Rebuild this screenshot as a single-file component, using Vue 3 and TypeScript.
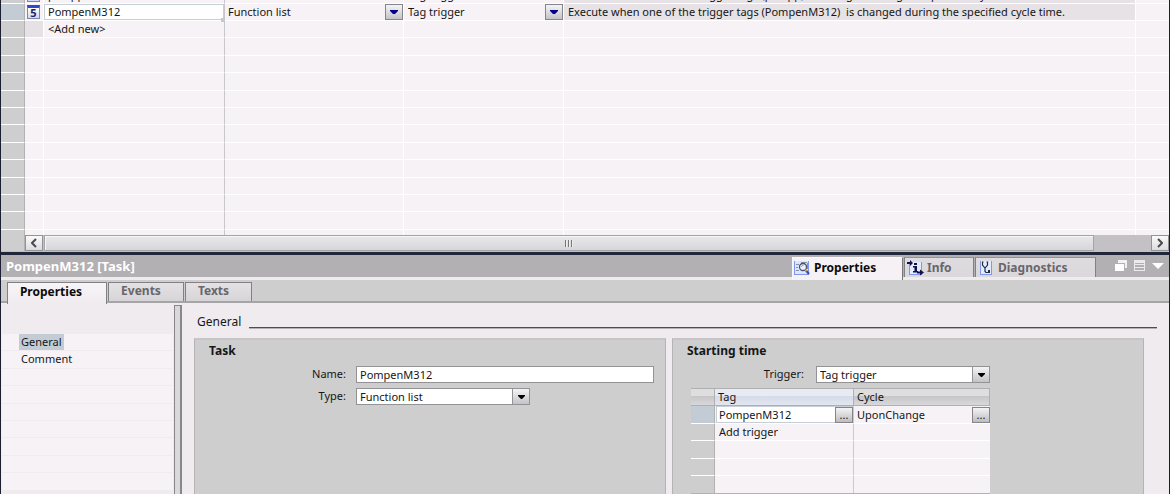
<script setup lang="ts">
import { ref } from 'vue'

interface Task {
  id: number
  name: string
  type: string
  trigger: string
  description: string
}

const describe = (tag: string): string =>
  `Execute when one of the trigger tags (${tag})  is changed during the specified cycle time.`

const previous: Task = { id: 4, name: 'pstopp', type: 'Function list', trigger: 'Tag trigger', description: describe('pstopp') }
const current: Task = { id: 5, name: 'PompenM312', type: 'Function list', trigger: 'Tag trigger', description: describe('PompenM312') }

const taskName = ref(current.name)
const taskType = ref(current.type)
const trigger = ref(current.trigger)
const cellName = ref(current.name)
const tagName = ref(current.name)
const emptyRows = 12
const navRows = 7
const sheets = ['Properties', 'Events', 'Texts']
const activeSheet = ref('Properties')
</script>

<template>
  <div class="app">
    <section class="tasks">
      <div class="viewport">
        <table class="grid" aria-label="Scheduled tasks">
          <colgroup>
            <col class="c-gutter" /><col class="c-icon" /><col class="c-name" /><col class="c-type" />
            <col class="c-trigger" /><col /><col class="c-end" />
          </colgroup>
          <tbody>
            <tr>
              <td class="gutter"></td>
              <td class="icon-cell"><span class="num">{{ previous.id }}</span></td>
              <td class="name">{{ previous.name }}</td>
              <td>{{ previous.type }}</td>
              <td>{{ previous.trigger }}</td>
              <td class="desc">{{ previous.description }}</td>
              <td></td>
            </tr>
            <tr class="selected">
              <td class="gutter"></td>
              <td class="icon-cell"><span class="num">{{ current.id }}</span></td>
              <td class="name editing">
                <input v-model="cellName" class="cell-input" aria-label="Task name" /><i class="handle"></i>
              </td>
              <td>
                <div class="pick">
                  <select v-model="taskType" aria-label="Task type"><option>Function list</option></select>
                  <span class="arrow"><svg width="8" height="4" viewBox="0 0 8 4"><path d="M0 0H8V1L5 4H3L0 1Z" /></svg></span>
                </div>
              </td>
              <td>
                <div class="pick">
                  <select v-model="trigger" aria-label="Task trigger"><option>Tag trigger</option></select>
                  <span class="arrow"><svg width="8" height="4" viewBox="0 0 8 4"><path d="M0 0H8V1L5 4H3L0 1Z" /></svg></span>
                </div>
              </td>
              <td class="desc">{{ current.description }}</td>
              <td></td>
            </tr>
            <tr>
              <td class="gutter"></td><td class="icon-cell dim"></td><td class="name">&lt;Add new&gt;</td>
              <td></td><td></td><td></td><td></td>
            </tr>
            <tr v-for="n in emptyRows" :key="n">
              <td class="gutter"></td><td></td><td class="name"></td><td></td><td></td><td></td><td></td>
            </tr>
          </tbody>
        </table>
      </div>
      <div class="hscroll">
        <span class="corner"></span>
        <button class="sbtn" aria-label="Scroll left"><svg width="6" height="10" viewBox="0 0 6 10"><path d="M5 1L1 5L5 9" /></svg></button>
        <div class="track"><div class="thumb"><i></i><i></i><i></i></div></div>
        <button class="sbtn" aria-label="Scroll right"><svg width="6" height="10" viewBox="0 0 6 10"><path d="M1 1L5 5L1 9" /></svg></button>
      </div>
    </section>

    <section class="inspector">
      <header class="titlebar">
        <h1>PompenM312 [Task]</h1>
        <nav class="views" aria-label="Inspector views">
          <button class="view v-props active">
            <svg width="17" height="16" viewBox="0 0 17 16">
              <rect x="0" y="1" width="15" height="14" fill="#7f98ee" /><rect x="1" y="1" width="13" height="13" fill="#dbe5ff" />
              <path d="M2 4.500H5M2 7.500H4M2 10.500H5" stroke="#8890a8" />
              <path d="M7 2.500H13M13.500 3V9" stroke="#8890a8" fill="none" />
              <circle cx="9" cy="7" r="3.500" fill="#eef4ff" stroke="#4a506c" stroke-width="1.300" />
              <path d="M7.500 7a1.500 1.500 0 0 1 2-1.500" stroke="#8594bb" fill="none" />
              <path d="M12 10.500L15 14" stroke="#3a55a0" stroke-width="2.200" /><path d="M11.500 9.500L13 11" stroke="#d8a040" stroke-width="1.500" />
            </svg>Properties
          </button>
          <button class="view v-info">
            <svg width="17" height="16" viewBox="0 0 17 16">
              <rect x="2" y="2" width="13" height="13" fill="#7f98ee" /><rect x="3" y="2" width="11" height="12" fill="#e4edff" />
              <path d="M0 2H3V0L6 3L3 6V4H0ZM10 11.500H13V9.500L17 12.500L13 15.500V13.500H10Z" fill="#10104e" />
              <path d="M7 3H10V5H7ZM6 6H10V11H11V12.500H6V11H7.500V7.500H6Z" fill="#10104e" />
            </svg>Info
          </button>
          <button class="view v-diag">
            <svg width="13" height="16" viewBox="0 0 13 16">
              <rect x="0" y="1" width="12" height="14" fill="#7f98ee" /><rect x="1" y="1" width="10" height="13" fill="#e4edff" />
              <path d="M3.500 2H2.500V5L4.500 7.500H5.500L7.500 5V2H6.500M5 7.500V11.500L6 12.500H8" stroke="#222947" stroke-width="1.200" fill="none" />
              <rect x="8" y="10" width="2" height="3" fill="#222947" />
            </svg>Diagnostics
          </button>
        </nav>
        <div class="winbtns">
          <button aria-label="Float"><svg width="12" height="11" viewBox="0 0 12 11"><path d="M3 0H12V8H10V3H3Z" opacity=".85" /><path d="M0 4H9V11H0Z" /></svg></button>
          <button aria-label="Restore"><svg width="11" height="11" viewBox="0 0 11 11"><path d="M0 0H11V3H0ZM0 4H11V5H0ZM0 7H11V8H0ZM0 10H11V11H0ZM0 3H1V11H0ZM10 3H11V11H10Z" opacity=".75" /></svg></button>
          <button aria-label="Collapse"><svg width="12" height="16" viewBox="0 0 12 16"><path d="M0 5H12L6 11Z" /></svg></button>
        </div>
      </header>

      <div class="sheets" role="tablist">
        <button
          v-for="s in sheets" :key="s" role="tab" :class="['sheet', s.toLowerCase(), { active: s === activeSheet }]"
          :aria-selected="s === activeSheet" @click="activeSheet = s"
        >{{ s }}</button>
      </div>

      <div class="body">
        <nav class="side" aria-label="Sections">
          <ul>
            <li><a href="#general" class="on">General</a></li>
            <li><a href="#comment">Comment</a></li>
            <li v-for="n in navRows" :key="n"></li>
          </ul>
        </nav>
        <div class="splitter"></div>
        <main class="content">
          <div class="heading"><h2 id="general">General</h2><hr /></div>
          <div class="panels">
            <section class="panel">
              <h3>Task</h3>
              <div class="field">
                <label for="f-name">Name:</label>
                <input id="f-name" v-model="taskName" class="box" />
              </div>
              <div class="field">
                <label for="f-type">Type:</label>
                <div class="combo">
                  <select id="f-type" v-model="taskType"><option>Function list</option></select>
                  <span class="arrow"><svg width="7" height="4" viewBox="0 0 7 4"><path d="M0 0H7V1L4 4H3L0 1Z" /></svg></span>
                </div>
              </div>
            </section>
            <section class="panel start">
              <h3>Starting time</h3>
              <div class="field">
                <label for="f-trigger">Trigger:</label>
                <div class="combo">
                  <select id="f-trigger" v-model="trigger"><option>Tag trigger</option></select>
                  <span class="arrow"><svg width="7" height="4" viewBox="0 0 7 4"><path d="M0 0H7V1L4 4H3L0 1Z" /></svg></span>
                </div>
              </div>
              <table class="tags" aria-label="Trigger tags">
                <colgroup><col class="t-gutter" /><col class="t-tag" /><col class="t-cycle" /></colgroup>
                <thead><tr><th></th><th class="sorted">Tag</th><th>Cycle</th></tr></thead>
                <tbody>
                  <tr class="selected">
                    <td></td>
                    <td class="edit"><div><input v-model="tagName" class="cell-input" aria-label="Tag" /><button class="more" aria-label="Browse tags">...</button></div></td>
                    <td class="cyc"><div><span>UponChange</span><button class="more" aria-label="Browse cycles">...</button></div></td>
                  </tr>
                  <tr><td></td><td>Add trigger</td><td></td></tr>
                  <tr v-for="n in 3" :key="n"><td></td><td></td><td></td></tr>
                </tbody>
              </table>
            </section>
          </div>
        </main>
      </div>
    </section>
  </div>
</template>

<style>
html, body { margin: 0; overflow: hidden; }
</style>

<style scoped>
* { box-sizing: border-box; }
.app {
  display: flex; flex-direction: column; height: 100vh; overflow: hidden;
  border: solid #1c1e32; border-width: 0 1px; background: #efebee; color: #161616;
  font: 11px/16px "Noto Sans", "Open Sans", sans-serif;
}
button, input, select { font: inherit; color: inherit; margin: 0; padding: 0; border: 0; border-radius: 0; background: none; outline: 0; }
button { display: flex; align-items: center; justify-content: center; }
select { appearance: none; width: 100%; height: 100%; }
svg { display: block; flex: none; }
h1, h2, h3, ul { margin: 0; padding: 0; }
table { table-layout: fixed; border-collapse: separate; border-spacing: 0; }

.tasks { flex: 1; min-height: 0; display: flex; flex-direction: column; }
.viewport { flex: 1; min-height: 0; overflow: hidden; background: #f6f2f6; }
.grid { width: 100%; margin-top: -14px; }
.c-gutter { width: 24px; }
.c-icon { width: 19px; }
.c-name { width: 181px; }
.c-type { width: 179px; }
.c-trigger { width: 160px; }
.c-end { width: 33px; }
.grid tr { height: 17px; }
.grid tr:nth-child(5n + 4), .grid tr:nth-child(5n + 1) { height: 18px; }
.grid td { padding: 0 0 0 4px; border: solid #fff; border-width: 0 1px 1px 0; white-space: pre; overflow: hidden; }
.grid td:last-child { border-right: 0; }
.grid td.gutter { background: #cecece; border-right-color: #b2b2b2; }
.grid td.name { border-right-color: #c8c8cc; }
.grid td.name + td { padding-left: 3px; }
.grid td.icon-cell { padding: 0 0 0 2px; }
.grid td.dim { background: #e6e1e5; }
.grid td.desc { background: #e6e2e5; }
.selected .gutter { background: #c3ccd4 !important; }
.num {
  display: block; width: 13px; height: 14px; border: 1px solid #7f86ad; border-top: 3px solid #2b49c8;
  background: linear-gradient(#fff, #cfd7f5); color: #20245e; font-weight: 700; font-size: 11px; line-height: 10px; text-align: center;
}
.grid td.editing { position: relative; overflow: visible; padding: 0; }
.cell-input { width: 100%; height: 16px; background: #fff; border: 1px solid #c6cfd5; padding: 0 3px; min-width: 0; display: block; }
.handle { position: absolute; right: -1px; bottom: -2px; width: 4px; height: 4px; background: #c0cad2; }
.pick { display: flex; height: 16px; }
.pick select { flex: 1; min-width: 0; }
.arrow { display: flex; align-items: center; justify-content: center; background: linear-gradient(#f4f4f5, #c4c4c7); pointer-events: none; flex: none; }
.pick .arrow { width: 18px; border: 1px solid #858589; fill: #00008c; }

.hscroll { display: flex; height: 20px; flex: none; border-bottom: 3px solid #22263a; padding-bottom: 1px; background: #c4c1c5; }
.corner { width: 24px; background: #cecece; border-right: 1px solid #b2b2b2; }
.sbtn { width: 18px; border: 1px solid #939396; background: linear-gradient(#fafafa, #dcdcde); }
.sbtn path { fill: none; stroke: #4b4b4d; stroke-width: 2; }
.track { flex: 1; padding: 0 57px 0 1px; }
.thumb { height: 100%; display: flex; align-items: center; justify-content: center; gap: 1px; border: 1px solid #a4a4a8; background: linear-gradient(#e9e8ea, #d6d5d8); box-shadow: inset 1px 1px #f6f6f6; }
.thumb i { width: 2px; height: 7px; background: #77777a; border-right: 1px solid #eee; }

.inspector { flex: none; }
.titlebar { display: flex; height: 25px; padding-left: 5px; background: #b3b0b4; border-bottom: 3px solid #efebee; }
h1 { flex: 1; font-size: 13px; line-height: 22px; color: #fff; }
.views { display: flex; padding-top: 2px; gap: 1px; }
.view { height: 20px; padding: 0 2px; gap: 3px; justify-content: flex-start; font-weight: 700; font-size: 12px; color: #68666a; background: linear-gradient(#dedcdf, #dad8db); border: 1px solid #818084; border-bottom: 0; border-top-color: #949296; }
.view.active { height: 23px; padding-bottom: 3px; padding-left: 1px; background: #f5f1f5; color: #0c0c0c; border-color: #f9f7f9 #77767a #f9f7f9 #f9f7f9; }
.v-props { width: 111px; }
.v-info { width: 70px; }
.v-diag { width: 121px; padding-left: 4px; gap: 5px; }
.winbtns { display: flex; gap: 7px; padding: 5px 5px 0 19px; align-items: flex-start; fill: #fff; }
.winbtns button { height: 11px; }

.sheets { display: flex; gap: 1px; height: 23px; padding: 2px 0 0 6px; background: #cecece; border-bottom: 2px solid #a5a4a7; }
.sheet { height: 19px; padding-bottom: 2px; font-weight: 700; font-size: 12px; color: #68666a; background: linear-gradient(#e4e2e5, #d6d4d7); border: 1px solid #818084; border-bottom: 0; }
.sheet.active { height: 22px; padding-bottom: 4px; background: linear-gradient(#f8f5f8, #efebee); color: #0c0c0c; }
.sheet.properties { width: 100px; padding-right: 12px; }
.sheet.events { width: 76px; padding-right: 10px; }
.sheet.texts { width: 67px; padding-right: 10px; }

.body { display: flex; align-items: stretch; }
.side { width: 172px; padding: 31px 0 0 1px; }
.side ul { list-style: none; }
.side li { height: 17px; padding-left: 17px; background: #f6f2f6; border-bottom: 1px solid #efebee; }
.side li:nth-child(5n + 2), .side li:nth-child(5n + 4) { height: 18px; }
.side a { display: inline-block; padding: 0 2px; color: inherit; text-decoration: none; }
.side a.on { background: #c3ccd4; }
.splitter { width: 8px; margin: 2px 0 0 1px; border: 1px solid #88878a; border-right-width: 2px; border-bottom: 0; background: #dad8db; }
.content { flex: 1; min-width: 0; padding: 0 12px 0 12px; }
.heading { display: flex; align-items: flex-end; gap: 8px; height: 26px; padding-left: 3px; }
h2 { font-size: 12px; font-weight: 400; line-height: 14px; }
hr { flex: 1; margin: 0; border: 0; height: 2px; background: #4f4d52; border-bottom: 1px solid #b5b2b6; }
.panels { display: flex; gap: 6px; margin: 9px 13px 0 0; }
.panel { flex: 1; min-width: 0; min-height: 156px; padding: 2px 11px 0 14px; background: #cecece; border: 1px solid #b5b3b5; border-top: 2px solid #c6c4c6; border-bottom: 0; }
h3 { font-size: 12px; line-height: 18px; margin-bottom: 6px; }
.field { display: flex; height: 17px; margin-bottom: 5px; }
.field label { width: 137px; text-align: right; margin-right: 10px; }
.start .field label { width: 117px; margin-right: 12px; }
.box { flex: 1; min-width: 0; background: #fff; border: 1px solid #939396; padding: 0 3px; }
.combo { display: flex; width: 174px; background: #fff; border: 1px solid #939396; }
.combo select { flex: 1; min-width: 0; padding: 0 3px; }
.combo .arrow { width: 17px; border-left: 1px solid #939396; }

.tags { width: 299px; margin-left: 4px; border-bottom: 1px solid #b2b2b4; }
.t-gutter { width: 24px; }
.t-tag { width: 139px; }
.tags tr { height: 17px; }
.tags thead tr, .tags tbody tr:nth-child(odd) { height: 18px; }
.tags tbody tr:last-child { height: 17px; }
.tags th { padding: 0 3px; text-align: left; font-weight: 400; background: linear-gradient(#dededf 45%, #c6c6c8 46%, #d8d8da); border: 1px solid #b0b0b3; border-left: 0; }
.tags th.sorted { background: linear-gradient(#e8ebf3 45%, #d6dce8 46%, #e2e6f0); }
.tags td { padding: 0 0 0 4px; background: #f6f2f6; border: solid #fff; border-width: 0 0 1px; }
.tags td:first-child { background: #cecece; border-right: 1px solid #b2b2b2; }
.tags td:nth-child(2) { border-right: 1px solid #ccc9cd; }
.tags tbody tr:last-child td { border-bottom: 0; }
.tags .selected td:first-child { background: #c3ccd4; }
.tags .edit { padding: 0 0 0 1px; }
.tags .cyc { padding-left: 3px; }
.tags td div { display: flex; height: 17px; align-items: center; justify-content: space-between; }
.tags .edit div { background: #fff; border: 1px solid #c6cfd5; border-right: 0; }
.tags .cell-input { border: 0; padding: 0 2px; height: 15px; }
.more { width: 18px; height: 16px; flex: none; border: 1px solid #858589; background: linear-gradient(#f4f4f5, #bdbdc0); line-height: 10px; }
</style>
